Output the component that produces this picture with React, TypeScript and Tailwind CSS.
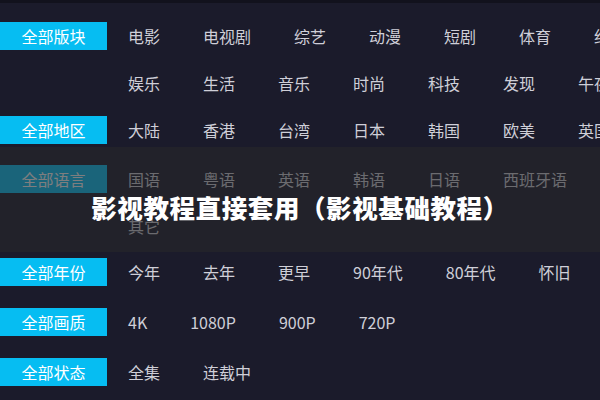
const categories: { label: string; mt: number; lines: string[][] }[] = [
  {
    label: '全部版块',
    mt: 22,
    lines: [
      ['电影', '电视剧', '综艺', '动漫', '短剧', '体育', '纪录片'],
      ['娱乐', '生活', '音乐', '时尚', '科技', '发现', '午夜'],
    ],
  },
  {
    label: '全部地区',
    mt: 19,
    lines: [['大陆', '香港', '台湾', '日本', '韩国', '欧美', '英国']],
  },
  {
    label: '全部语言',
    mt: 21,
    lines: [['国语', '粤语', '英语', '韩语', '日语', '西班牙语'], ['其它']],
  },
  {
    label: '全部年份',
    mt: 18,
    lines: [['今年', '去年', '更早', '90年代', '80年代', '怀旧']],
  },
  {
    label: '全部画质',
    mt: 22,
    lines: [['4K', '1080P', '900P', '720P']],
  },
  {
    label: '全部状态',
    mt: 22,
    lines: [['全集', '连载中']],
  },
];

export default function App() {
  return (
    <div
      className="relative w-[600px] h-[400px] overflow-hidden bg-[#1b1b2b]"
      style={{ fontFamily: '"Noto Sans CJK SC", "Noto Sans", sans-serif' }}
    >
      <div className="h-[3px] bg-[#12121d]" />
      <div className="flex flex-col">
        {categories.map((cat, i) => (
          <div
            key={cat.label}
            className="flex items-start"
            style={{ marginTop: i === 0 ? cat.mt - 3 : cat.mt }}
          >
            <div className="w-[107px] h-[28px] shrink-0 bg-[#06bdf2] flex items-center justify-center text-[16px] text-white leading-none">
              {cat.label}
            </div>
            <div className="ml-[21px] flex flex-col gap-[19px]">
              {cat.lines.map((line, j) => (
                <div key={j} className="h-[28px] flex items-center gap-[43px] whitespace-nowrap">
                  {line.map((item) => (
                    <span key={item} className="text-[16px] leading-none text-[#cfcfd8]">
                      {item}
                    </span>
                  ))}
                </div>
              ))}
            </div>
          </div>
        ))}
      </div>

      {/* translucent caption band laid over the filter list */}
      <div className="absolute left-0 right-0 top-[147px] h-[105px] bg-[rgba(40,40,42,0.6)] flex items-center justify-center pt-[15px]">
        <h1 className="text-[25.5px] font-black text-white leading-none tracking-[0.6px]">
          影视教程直接套用（影视基础教程）
        </h1>
      </div>
    </div>
  );
}
